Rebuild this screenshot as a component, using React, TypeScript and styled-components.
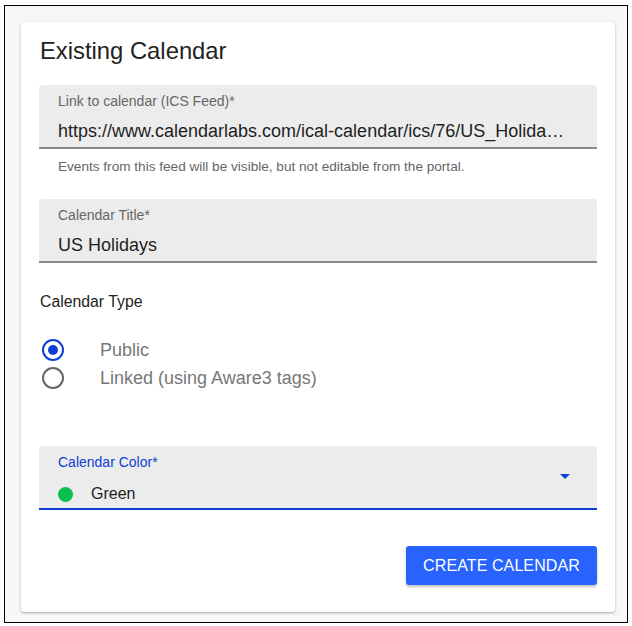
import styled, { createGlobalStyle } from "styled-components";

const GlobalStyle = createGlobalStyle`
  html, body {
    margin: 0;
    padding: 0;
    background: #ffffff;
    font-family: "Liberation Sans", Arial, sans-serif;
  }
`;

const BLUE = "#0d3fd6";

const Frame = styled.div`
  margin: 5px 0 0 4px;
  width: 624px;
  height: 618px;
  border: 1px solid #000;
  background: #f7f7f7;
  padding: 16px 12px 10px 16px;
  box-sizing: border-box;
`;

const Card = styled.div`
  background: #fff;
  border-radius: 3px;
  box-shadow: 0 1px 3px rgba(0, 0, 0, 0.25), 0 1px 1px rgba(0, 0, 0, 0.08);
  height: 100%;
  box-sizing: border-box;
  padding: 15px 18px 0 18px;
  display: flex;
  flex-direction: column;
`;

const Title = styled.h2`
  margin: 0 0 20px 1px;
  font-size: 23.8px;
  line-height: 28px;
  font-weight: 400;
  color: #222;
`;

const Field = styled.div<{ $focused?: boolean }>`
  background: #ececec;
  border-radius: 4px 4px 0 0;
  height: 64px;
  box-sizing: border-box;
  border-bottom: 2px solid ${({ $focused }) => ($focused ? BLUE : "#8a8a8a")};
  padding: 8px 28px 0 19px;
  position: relative;
`;

const Label = styled.div<{ $focused?: boolean }>`
  font-size: 14px;
  line-height: 16px;
  color: ${({ $focused }) => ($focused ? BLUE : "#666")};
`;

const Value = styled.div`
  margin-top: 11px;
  font-size: 18px;
  line-height: 22px;
  color: #1e1e1e;
  white-space: nowrap;
  overflow: hidden;
  text-overflow: ellipsis;
`;

const Helper = styled.div`
  font-size: 13.6px;
  line-height: 16px;
  color: #666;
  margin: 10px 0 0 19px;
`;

const SectionTitle = styled.div`
  font-size: 15.8px;
  line-height: 20px;
  color: #222;
  margin: 29px 0 0 1px;
`;

const RadioGroup = styled.div`
  display: flex;
  flex-direction: column;
  margin-top: 27px;
  gap: 6px;
`;

const RadioRow = styled.label`
  display: flex;
  align-items: center;
  gap: 36px;
  height: 22px;
  font-size: 18px;
  color: #777;
`;

const RadioCircle = styled.span<{ $checked?: boolean }>`
  width: 22px;
  height: 22px;
  box-sizing: border-box;
  border-radius: 50%;
  border: 2px solid ${({ $checked }) => ($checked ? BLUE : "#666")};
  margin-left: 3px;
  display: flex;
  align-items: center;
  justify-content: center;

  &::after {
    content: "";
    display: ${({ $checked }) => ($checked ? "block" : "none")};
    width: 10px;
    height: 10px;
    border-radius: 50%;
    background: ${BLUE};
  }
`;

const SelectValue = styled.div`
  display: flex;
  align-items: center;
  gap: 18px;
  margin-top: 13px;
  font-size: 16px;
  line-height: 22px;
  color: #1e1e1e;
`;

const Dot = styled.span<{ $color: string }>`
  width: 15px;
  height: 15px;
  border-radius: 50%;
  background: ${({ $color }) => $color};
`;

const Arrow = styled.span`
  position: absolute;
  right: 27px;
  top: 28px;
  width: 0;
  height: 0;
  border-left: 5px solid transparent;
  border-right: 5px solid transparent;
  border-top: 5px solid ${BLUE};
`;

const Actions = styled.div`
  display: flex;
  justify-content: flex-end;
  margin-top: 36px;
`;

const Button = styled.button`
  background: #2862ff;
  color: #fff;
  border: none;
  border-radius: 3px;
  height: 39px;
  width: 191px;
  padding: 0;
  font-family: "Liberation Sans", Arial, sans-serif;
  font-size: 16px;
  letter-spacing: 0.1px;
  white-space: nowrap;
  text-transform: uppercase;
  box-shadow: 0 2px 3px rgba(0, 0, 0, 0.25);
`;

export default function App() {
  return (
    <>
      <GlobalStyle />
      <Frame>
        <Card>
          <Title>Existing Calendar</Title>
          <Field>
            <Label>Link to calendar (ICS Feed)*</Label>
            <Value>https://www.calendarlabs.com/ical-calendar/ics/76/US_Holidays.ics</Value>
          </Field>
          <Helper>Events from this feed will be visible, but not editable from the portal.</Helper>
          <Field style={{ marginTop: 24 }}>
            <Label>Calendar Title*</Label>
            <Value>US Holidays</Value>
          </Field>
          <SectionTitle>Calendar Type</SectionTitle>
          <RadioGroup>
            <RadioRow>
              <RadioCircle $checked />
              Public
            </RadioRow>
            <RadioRow>
              <RadioCircle />
              Linked (using Aware3 tags)
            </RadioRow>
          </RadioGroup>
          <Field $focused style={{ marginTop: 57 }}>
            <Label $focused>Calendar Color*</Label>
            <SelectValue>
              <Dot $color="#0dc04b" />
              Green
            </SelectValue>
            <Arrow />
          </Field>
          <Actions>
            <Button>Create Calendar</Button>
          </Actions>
        </Card>
      </Frame>
    </>
  );
}
